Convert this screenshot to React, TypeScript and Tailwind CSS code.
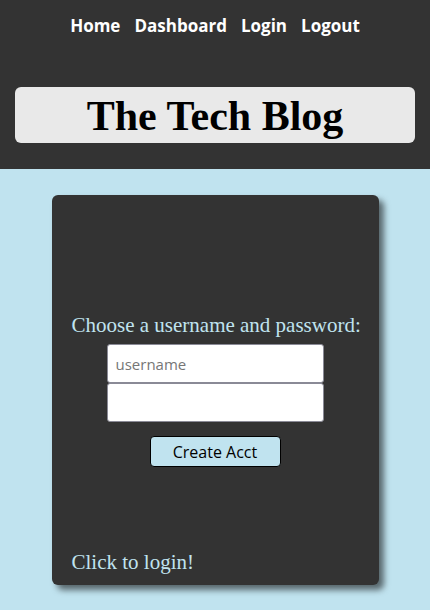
export default function App() {
  const links = ['Home', 'Dashboard', 'Login', 'Logout'];
  return (
    <div className="min-h-[610px] bg-[#c0e3ef]">
      <header className="bg-[#333333] h-[169px] flex flex-col items-center pt-[13px] px-[15px]">
        <nav className="flex gap-[14px] font-['Open_Sans',sans-serif] font-bold text-[17px] text-white leading-[26px]">
          {links.map((l) => (
            <a key={l} className="cursor-pointer">{l}</a>
          ))}
        </nav>
        <div className="mt-[48px] w-full h-[56px] bg-[#e9e9e9] rounded-[6px] flex items-center justify-center">
          <h1 className="font-['Liberation_Serif',serif] font-bold text-[42px] text-black leading-none pt-[1px]">
            The Tech Blog
          </h1>
        </div>
      </header>

      <main className="flex justify-center pt-[26px]">
        <div className="w-[327px] h-[390px] bg-[#333333] rounded-[6px] shadow-[5px_5px_6px_rgba(0,0,0,0.55)] flex flex-col px-[20px] font-['Liberation_Serif',serif] text-[#c0e3ef]">
          <form className="flex flex-col items-center mt-[118px]">
            <p className="text-[21px] leading-[25px] self-start whitespace-nowrap">Choose a username and password:</p>
            <input
              placeholder="username"
              className="mt-[6px] w-[217px] h-[39px] bg-white rounded-[3px] border border-[#8a8a96] px-[8px] font-['Open_Sans',sans-serif] text-[15px] text-black placeholder:text-[#767676] outline-none"
            />
            <input
              type="password"
              className="w-[217px] h-[39px] bg-white rounded-[3px] border border-[#8a8a96] px-[8px] font-['Open_Sans',sans-serif] text-[15px] text-black outline-none"
            />
            <button
              type="button"
              className="mt-[14px] w-[131px] h-[31px] bg-[#c0e3ef] border border-black rounded-[4px] font-['Open_Sans',sans-serif] text-[16px] text-black"
            >
              Create Acct
            </button>
          </form>
          <p className="mt-auto mb-[10px] text-[21px] leading-[25px] whitespace-nowrap">Click to login!</p>
        </div>
      </main>
    </div>
  );
}
